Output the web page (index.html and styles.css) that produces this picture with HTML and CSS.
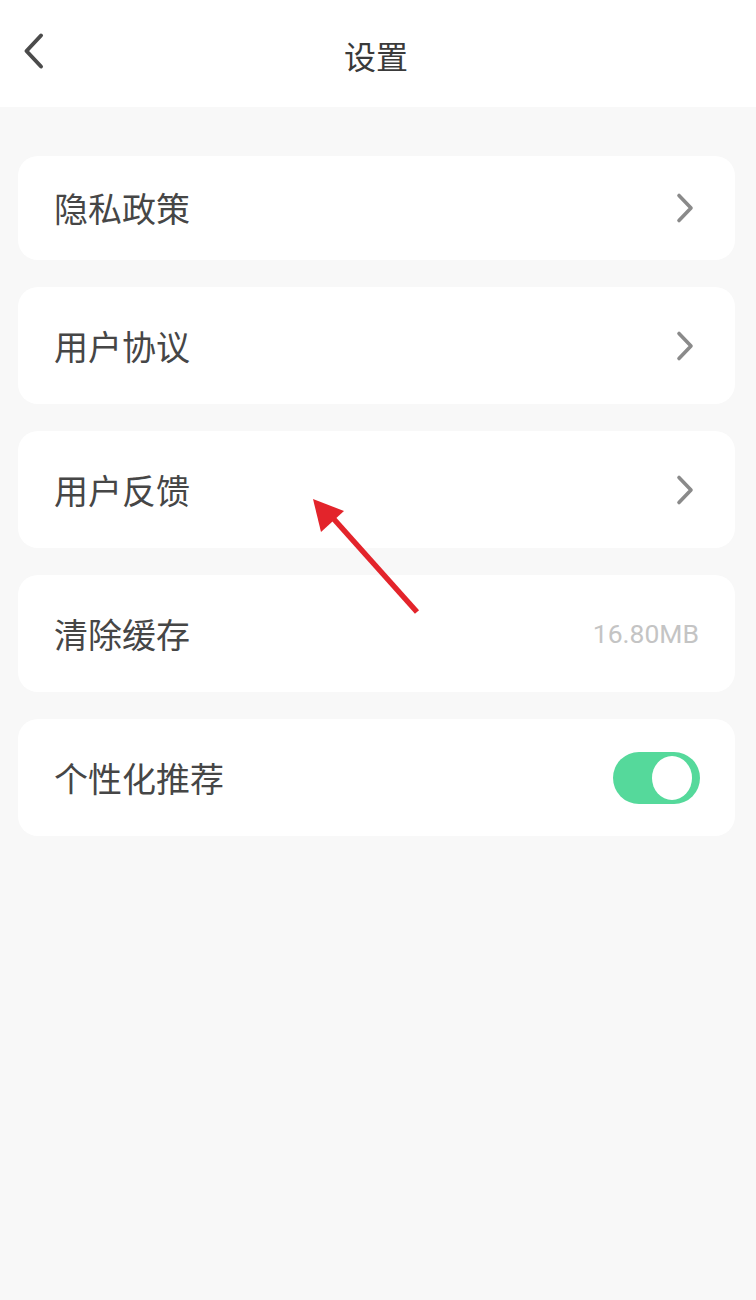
FILE: index.html
```html
<!DOCTYPE html>
<html lang="zh-CN">
<head>
<meta charset="utf-8">
<title>设置</title>
<link rel="stylesheet" href="styles.css">
</head>
<body>
<div class="page">
  <header class="topbar">
    <div class="back">
      <svg width="24" height="40" viewBox="0 0 24 40"><path d="M19 4.5 L4.5 20 L19 35.5" fill="none" stroke="#4b4b4b" stroke-width="4" stroke-linecap="round" stroke-linejoin="round"/></svg>
    </div>
    <div class="title">设置</div>
    <div></div>
  </header>
  <main class="list">
    <div class="card card-first">
      <span class="label">隐私政策</span>
      <svg class="chev" width="26" height="32" viewBox="0 0 26 32"><path d="M5 3.5 L17 16 L5 28.5" fill="none" stroke="#8a8a8a" stroke-width="3.6" stroke-linecap="round" stroke-linejoin="round"/></svg>
    </div>
    <div class="card">
      <span class="label">用户协议</span>
      <svg class="chev" width="26" height="32" viewBox="0 0 26 32"><path d="M5 3.5 L17 16 L5 28.5" fill="none" stroke="#8a8a8a" stroke-width="3.6" stroke-linecap="round" stroke-linejoin="round"/></svg>
    </div>
    <div class="card">
      <span class="label">用户反馈</span>
      <svg class="chev" width="26" height="32" viewBox="0 0 26 32"><path d="M5 3.5 L17 16 L5 28.5" fill="none" stroke="#8a8a8a" stroke-width="3.6" stroke-linecap="round" stroke-linejoin="round"/></svg>
    </div>
    <div class="card">
      <span class="label">清除缓存</span>
      <span class="value">16.80MB</span>
    </div>
    <div class="card">
      <span class="label">个性化推荐</span>
      <span class="toggle"><span class="knob"></span></span>
    </div>
  </main>
  <svg class="arrow" width="756" height="1300" viewBox="0 0 756 1300">
    <line x1="417" y1="612" x2="332" y2="517" stroke="#e3242b" stroke-width="5.5" stroke-linecap="butt"/>
    <polygon points="313,499 321,532 344,511" fill="#e3242b"/>
  </svg>
</div>
</body>
</html>
```

FILE: styles.css
```css
* { box-sizing: border-box; }
html, body {
  margin: 0;
  padding: 0;
  background: #f8f8f8;
}
.page {
  position: relative;
  width: 756px;
  min-height: 1300px;
  background: #f8f8f8;
  font-family: "Noto Sans CJK SC", "Noto Sans", sans-serif;
}
.topbar {
  height: 107px;
  background: #ffffff;
  display: grid;
  grid-template-columns: 1fr auto 1fr;
  align-items: center;
}
.back {
  align-self: start;
  margin-top: 31px;
  margin-left: 22px;
  height: 40px;
}
.back svg { display: block; }
.title {
  font-size: 32px;
  color: #3a3a3a;
  line-height: 40px;
  margin-left: -4px;
  margin-top: 2px;
}
.list {
  padding: 49px 21px 0 18px;
  display: flex;
  flex-direction: column;
  gap: 27px;
}
.card {
  height: 117px;
  background: #ffffff;
  border-radius: 20px;
  padding: 0 36px;
  display: flex;
  align-items: center;
  justify-content: space-between;
}
.card-first { height: 104px; }
.label {
  font-size: 34px;
  color: #464646;
  line-height: 40px;
}
.chev {
  display: block;
  margin-right: -1px;
}
.value {
  font-family: Roboto, "Noto Sans", sans-serif;
  font-size: 26.5px;
  color: #c4c4c4;
  line-height: 32px;
}
.toggle {
  position: relative;
  width: 87px;
  height: 52px;
  border-radius: 26px;
  background: #55d99b;
  margin-right: -1px;
}
.knob {
  position: absolute;
  top: 4px;
  right: 8px;
  width: 40px;
  height: 44px;
  border-radius: 50%;
  background: #ffffff;
}
.arrow {
  position: absolute;
  left: 0;
  top: 0;
  pointer-events: none;
}
```
